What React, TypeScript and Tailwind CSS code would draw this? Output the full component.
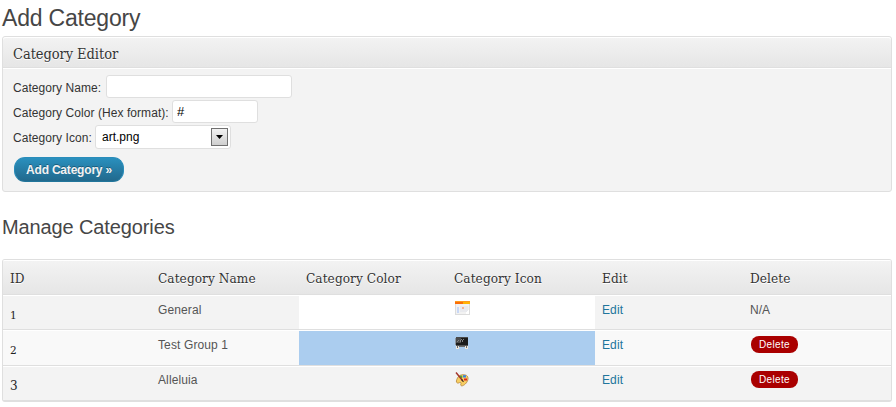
import type { ReactNode } from 'react';

const serif = "font-['DejaVu_Serif_Condensed','DejaVu_Serif',serif] text-[#333] [text-shadow:0_1px_0_#fff]";

function CalendarIcon() {
  return (
    <svg width="15" height="14" viewBox="0 0 15 14" shapeRendering="crispEdges">
      <rect width="15" height="14" fill="#dcdcdc" />
      <rect x="1" y="3" width="13" height="10" fill="#f2f2f2" />
      <rect width="15" height="3" fill="#fd9a1c" />
      <rect y="1" width="8" height="2" fill="#fb6d08" />
      <rect x="8" y="1" width="7" height="2" fill="#ffb404" />
      <rect x="2" y="6" width="2" height="6" fill="#c9d8f6" />
      <rect x="5" y="5" width="8" height="6" fill="#e9eaee" />
      <rect x="7" y="6" width="2" height="2" fill="#f4b49a" />
      <path d="M11 13v-2h1v-1h1v-1h1v4z" fill="#fff" />
    </svg>
  );
}

function BoardIcon() {
  return (
    <svg width="14" height="12" viewBox="0 0 14 12" shapeRendering="crispEdges">
      <path d="M1 9h3v3H1zM10 9h3v3h-3z" fill="#eee7dd" />
      <path d="M2 9h1v2H2zM11 9h1v2h-1zM4 9h6v1H4z" fill="#6b6b6b" />
      <path d="M0 1h1v7H0z" fill="#8d97a2" />
      <path d="M1 0h12v9H1z" fill="#1b1b1b" />
      <path d="M1 0h12v1H1z" fill="#4a4a4a" />
      <path d="M1 1h5v5H1z" fill="#4b4b4b" />
      <path d="M3 3h1v1H3zM2 4h1v1H2zM5 3h1v2H5zM6 2h1v1H6zM7 3h1v2H7zM8 2h1v1H8z" fill="#858585" />
      <path d="M1 8h12v1H1z" fill="#555" />
    </svg>
  );
}

function PaletteIcon() {
  return (
    <svg width="14" height="15" viewBox="0 0 14 15">
      <path d="M2.5 6C4 3 7 2.2 10.5 3c3 .8 3.2 4.400 1.300 7.200-1.700 2.600-4.600 4.300-5.800 3.400-1.100-.8.6-2-.2-3-1-.9-2 1-3.400.4C.6 10.400 1.500 7.800 2.500 6z" fill="#f7cf62" stroke="#b5853c" strokeWidth=".8" />
      <circle cx="6" cy="5" r="1.4" fill="#4ea83d" />
      <rect x="8" y="3.2" width="3" height="2.3" fill="#3983dd" />
      <rect x="9" y="6.5" width="3" height="2" fill="#e52121" />
      <path d="M1 .5l6.500 8" stroke="#a3352c" strokeWidth="1.4" />
      <path d="M6.500 7.300l2 2.500" stroke="#452921" strokeWidth="1.2" />
    </svg>
  );
}

function Cell({ children, className = '' }: { children?: ReactNode; className?: string }) {
  return <div className={`px-[7px] ${className}`}>{children}</div>;
}

const idBase = "font-['DejaVu_Serif',serif] text-[#222]";

const rows = [
  { id: '1', name: 'General', icon: <CalendarIcon />, idStyle: 'text-[10.5px] pt-[10px]', textTop: 'pt-[5px]', iconTop: 'pt-[5px]', fill: 'bg-white', box: 'h-[35px] bg-[#f3f3f3] border-b', fixed: true },
  { id: '2', name: 'Test Group 1', icon: <BoardIcon />, idStyle: 'text-[10.5px] pt-[10px]', textTop: 'pt-[5px]', iconTop: 'pt-[6px]', fill: 'bg-[#abcdef]', box: 'h-[36px] bg-[#f9f9f9] border-b', fixed: false },
  { id: '3', name: 'Alleluia', icon: <PaletteIcon />, idStyle: 'text-[12px] pt-[10px]', textTop: 'pt-[4px]', iconTop: 'pt-[5px]', fill: '', box: 'h-[34px] bg-[#f3f3f3]', fixed: false },
];

const inputBase = 'h-[23px] rounded-[3px] border border-[#dfdfdf] bg-white text-black outline-none';
const labelBase = 'whitespace-nowrap leading-[26px] tracking-[0.06px]';

export default function App() {
  return (
    <main className="h-[407px] w-[896px] overflow-hidden bg-white pl-[2px] pr-[4px] font-['Liberation_Sans',Arial,sans-serif] text-[12px] text-[#333]">
      <h1 className="h-9 pt-1 text-[23px] leading-[28px] tracking-[-0.2px] text-[#464646] whitespace-nowrap">Add Category</h1>
      <section className="h-[156px] rounded-[3px] border border-[#dfdfdf] bg-[#f3f3f3]">
        <h2 className={`h-[31px] rounded-t-[3px] border-b border-[#dfdfdf] bg-linear-to-b from-[#f3f3f3] to-[#e6e6e6] pl-[10px] text-[14.5px] leading-[34px] tracking-[-0.06px] shadow-[inset_0_1px_0_#fff,0_1px_0_#fff] ${serif}`}>Category Editor</h2>
        <form className="pt-[7px] pl-[10px]">
          <div className="flex h-[25px]"><label className={`w-[93px] ${labelBase}`}>Category Name:</label><input className={`w-[186px] px-1 ${inputBase}`} /></div>
          <div className="flex h-[25px]"><label className={`w-[159px] ${labelBase}`}>Category Color (Hex format):</label><input defaultValue="#" className={`w-[86px] px-1 text-[13px] ${inputBase}`} /></div>
          <div className="flex h-[32px]">
            <label className={`w-[82px] ${labelBase}`}>Category Icon:</label>
            <div className="flex h-6 w-[136px] items-center justify-between rounded-[3px] border border-[#dfdfdf] bg-white pr-[2px] pl-[6px] text-black">
              <span>art.png</span>
              <span className="grid h-[18px] w-[17px] place-items-center border border-[#707070] bg-linear-to-b from-[#f2f2f2] to-[#cfcfcf]">
                <svg width="7" height="4" viewBox="0 0 7 4"><path d="M0 0h7L3.500 4z" fill="#000" /></svg>
              </span>
            </div>
          </div>
          <button type="button" className="ml-[1px] h-[25px] w-[110px] rounded-[11px] border border-[#298cba] border-b-[#21759b] bg-linear-to-b from-[#2a90be] to-[#21698d] font-bold tracking-[-0.2px] text-[#f2f2f2] [text-shadow:0_-1px_0_rgba(0,0,0,.3)] whitespace-nowrap">Add Category »</button>
        </form>
      </section>
      <h1 className="mt-[21px] h-[46px] text-[20px] leading-[28px] tracking-[-0.12px] text-[#464646] whitespace-nowrap">Manage Categories</h1>
      <section className="h-[143px] overflow-hidden rounded-[3px] border border-b-2 border-[#dfdfdf]">
        <div className={`grid h-[35px] grid-cols-6 border-b border-[#dfdfdf] bg-linear-to-b from-[#f3f3f3] to-[#e6e6e6] text-[13.5px] leading-[37px] tracking-[0.07px] shadow-[inset_0_1px_0_#fff] ${serif}`}>
          {['ID', 'Category Name', 'Category Color', 'Category Icon', 'Edit', 'Delete'].map((title) => (
            <div key={title} className="px-[7px] whitespace-nowrap">{title}</div>
          ))}
        </div>
        {rows.map((row) => (
          <div key={row.id} className={`grid grid-cols-6 border-[#dfdfdf] pt-px shadow-[inset_0_1px_0_#fff] text-[#555] leading-[18px] ${row.box}`}>
            <Cell className={`${idBase} ${row.idStyle}`}>{row.id}</Cell>
            <Cell className={`tracking-[0.12px] ${row.textTop}`}>{row.name}</Cell>
            <Cell className={row.fill} />
            <Cell className={`${row.fill} ${row.iconTop}`}><div className="pl-px">{row.icon}</div></Cell>
            <Cell className={`tracking-[0.12px] ${row.textTop}`}><a className="text-[#21759b]">Edit</a></Cell>
            <Cell className={row.textTop}>{row.fixed ? 'N/A' : <button className="ml-[1px] block h-[17px] w-[47px] rounded-[8px] bg-[#a00] text-[10px] leading-[17px] tracking-[0.35px] text-white">Delete</button>}</Cell>
          </div>
        ))}
      </section>
    </main>
  );
}
